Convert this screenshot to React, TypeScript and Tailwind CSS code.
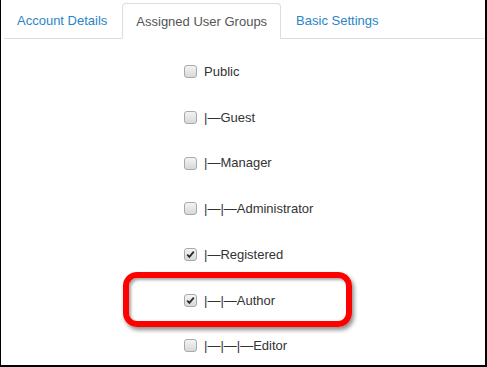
import React from "react";

const groups = [
  { label: "Public", checked: false },
  { label: "|—Guest", checked: false },
  { label: "|—Manager", checked: false },
  { label: "|—|—Administrator", checked: false },
  { label: "|—Registered", checked: true },
  { label: "|—|—Author", checked: true },
  { label: "|—|—|—Editor", checked: false },
];

function Box({ checked }: { checked: boolean }) {
  return (
    <span className="w-[13px] h-[13px] rounded-[3px] border border-[#a9a9a9] bg-gradient-to-b from-[#f4f4f4] to-[#d8d8d8] flex items-center justify-center">
      {checked && (
        <svg width="9" height="9" viewBox="0 0 9 9">
          <path d="M1.2 4.6 L3.4 6.9 L7.8 1.6" fill="none" stroke="#2b2b2b" strokeWidth="1.8" />
        </svg>
      )}
    </span>
  );
}

export default function App() {
  return (
    <div
      className="relative w-[487px] h-[367px] bg-white border-l border-r-2 border-b-2 border-black overflow-hidden"
      style={{ fontFamily: '"Liberation Sans", Arial, sans-serif' }}
    >
      <div className="ml-[3px] pt-[3px] flex items-end border-b border-[#dddddd] text-[13px]">
        <div className="h-[35px] pt-[1px] px-[13px] mr-[2px] flex items-center text-[#2a85c8]">Account Details</div>
        <div className="h-[36px] -mb-px pt-[1px] px-[13px] mr-[2px] flex items-center bg-white border border-[#dddddd] border-b-white rounded-t-[4px] text-[#555555]">
          Assigned User Groups
        </div>
        <div className="h-[35px] pt-[1px] px-[13px] flex items-center text-[#2a85c8]">Basic Settings</div>
      </div>

      <div className="pt-[10px] pl-[183px] flex flex-col">
        {groups.map((g) => (
          <div key={g.label} className="h-[45.7px] flex items-center gap-[7px] text-[13px] text-[#333333]">
            <Box checked={g.checked} />
            <span>{g.label}</span>
          </div>
        ))}
      </div>

      <div className="absolute left-[122px] top-[272px] w-[229px] h-[55px] rounded-[14px] border-[6px] border-[#ff0000] shadow-[2px_3px_4px_rgba(0,0,0,0.45),inset_2px_2px_3px_rgba(0,0,0,0.35)]" />
    </div>
  );
}
